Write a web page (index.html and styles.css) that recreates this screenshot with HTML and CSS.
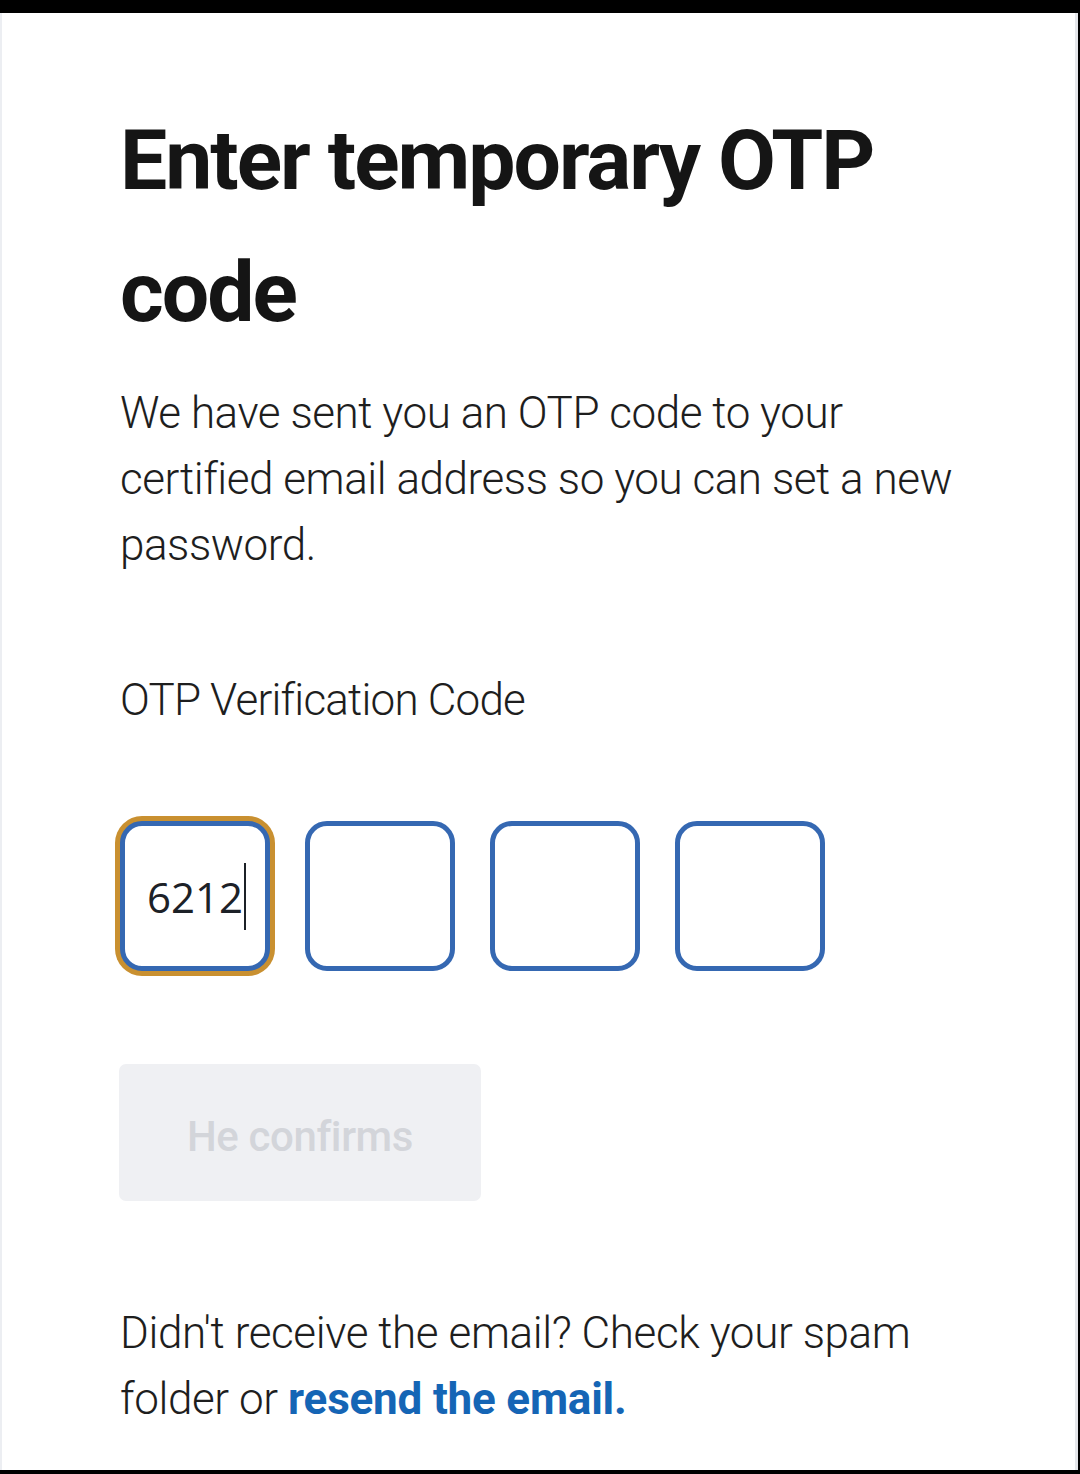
FILE: index.html
```html
<!DOCTYPE html>
<html lang="en">
<head>
<meta charset="utf-8">
<title>Enter temporary OTP code</title>
<link rel="stylesheet" href="styles.css">
</head>
<body>
<main class="screen">
  <section class="content">
    <h1 class="title">Enter temporary OTP code</h1>
    <p class="lead">We have sent you an OTP code to your certified email address so you can set a new password.</p>
    <p class="label">OTP Verification Code</p>
    <div class="otp">
      <div class="otp-box is-focused"><span class="otp-value">6212</span><span class="caret"></span></div>
      <div class="otp-box"></div>
      <div class="otp-box"></div>
      <div class="otp-box"></div>
    </div>
    <button class="confirm" type="button" disabled>He confirms</button>
    <p class="note">Didn't receive the email? Check your spam folder or <a class="resend" href="#">resend the email.</a></p>
  </section>
</main>
</body>
</html>
```
FILE: styles.css
```css
html, body {
  margin: 0;
  padding: 0;
}
body {
  background: #000;
  width: 1080px;
  height: 1474px;
  overflow: hidden;
  font-family: Roboto, "Noto Sans", sans-serif;
  color: #1e1e1e;
}
.screen {
  margin-top: 13px;
  height: 1457px;
  background: #fff;
  border-left: 2px solid #eceef2;
  border-right: 3px solid #e4e6ea;
  box-sizing: border-box;
  margin-right: 2px;
}
.content {
  padding: 82px 0 0 118px;
  width: 860px;
}
.title {
  margin: 0;
  font-size: 84px;
  line-height: 132px;
  font-weight: 700;
  letter-spacing: -2px;
  color: #151515;
}
.lead {
  margin: 21px 0 0;
  font-size: 44px;
  line-height: 66px;
  font-weight: 300;
  letter-spacing: -0.45px;
  color: #1e1e1e;
}
.label {
  margin: 89px 0 0;
  font-size: 44px;
  line-height: 66px;
  font-weight: 300;
  letter-spacing: -0.8px;
  color: #1e1e1e;
}
.otp {
  display: flex;
  gap: 35px;
  margin-top: 88px;
}
.otp-box {
  width: 150px;
  height: 150px;
  box-sizing: border-box;
  border: 5px solid #3568b2;
  border-radius: 22px;
  display: flex;
  align-items: center;
  padding-left: 22px;
  background: #fff;
}
.otp-box.is-focused {
  box-shadow: 0 0 0 5px #c99030;
}
.otp-value {
  font-family: "Open Sans", "Noto Sans", sans-serif;
  font-size: 42px;
  color: #1c2127;
}
.caret {
  display: inline-block;
  width: 2px;
  height: 67px;
  background: #1c2127;
  margin-left: 1px;
}
.confirm {
  display: block;
  margin-top: 93px;
  margin-left: -1px;
  width: 362px;
  height: 137px;
  border: none;
  border-radius: 7px;
  background: #eff0f3;
  color: #d3d5da;
  font-family: Roboto, "Noto Sans", sans-serif;
  font-size: 42px;
  font-weight: 500;
  letter-spacing: -0.4px;
  padding: 8px 0 0;
}
.note {
  margin: 99px 0 0;
  font-size: 44px;
  line-height: 66px;
  font-weight: 300;
  letter-spacing: -0.4px;
  color: #1e1e1e;
}
.resend {
  color: #1565b5;
  font-weight: 700;
  text-decoration: none;
  letter-spacing: -0.2px;
}
```
